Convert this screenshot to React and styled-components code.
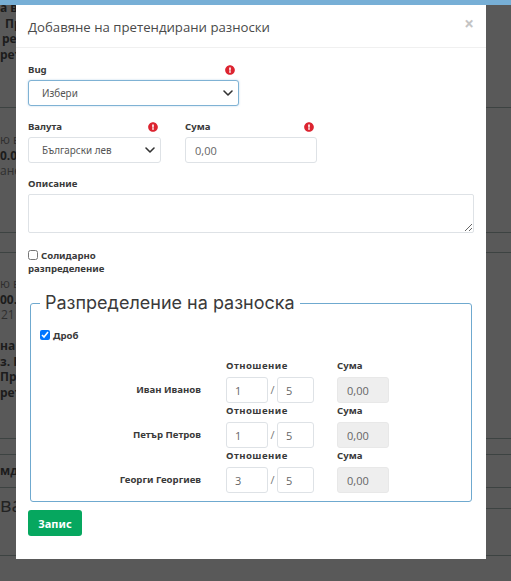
import React from 'react';
import styled, { createGlobalStyle } from 'styled-components';
import { FaExclamationCircle } from 'react-icons/fa';
import { LuChevronDown } from 'react-icons/lu';

const GlobalStyle = createGlobalStyle`
  html, body {
    margin: 0;
    padding: 0;
    height: 100%;
    background: #595959;
    overflow: hidden;
  }
  * { box-sizing: border-box; }
`;

const Page = styled.div`
  position: relative;
  width: 511px;
  height: 581px;
  overflow: hidden;
  font-family: 'Open Sans', 'Noto Sans', sans-serif;
`;

/* page behind the backdrop */
const TopBar = styled.div`
  position: relative;
  z-index: 1;
  height: 5px;
  background: #77afd6;
`;

const Section = styled.div`
  height: ${({ $h }) => $h}px;
  margin-top: ${({ $pull }) => ($pull ? -5 : 0)}px;
  padding-top: ${({ $top }) => $top || 0}px;
  border-bottom: 1px solid #3d4342;
`;

const BackLine = styled.div`
  height: 15.5px;
  line-height: 15.5px;
  font-size: 12px;
  font-weight: ${({ $bold }) => ($bold ? 700 : 400)};
  color: ${({ $bold }) => ($bold ? '#1c1c1c' : '#2f2f2f')};
  padding-left: ${({ $left }) => $left || 0}px;
  white-space: nowrap;
`;

const HeadingRow = styled.div`
  display: flex;
  height: 68px;
  border-bottom: 1px solid #3d4342;
`;

const BackHeading = styled.div`
  flex: none;
  width: 16px;
  margin-top: 5px;
  font-size: 20px;
  line-height: 24px;
  color: #222;
  white-space: nowrap;
`;

const HeadingRule = styled.div`
  flex: 1;
  height: 21px;
  border-bottom: 1px solid #3d4342;
`;

/* modal */
const Modal = styled.div`
  position: absolute;
  left: 16px;
  top: 5px;
  width: 470px;
  height: 554px;
  background: #fff;
`;

const ModalHeader = styled.div`
  display: flex;
  justify-content: space-between;
  height: 43px;
  padding: 12px 12px 0;
  border-bottom: 1px solid #f0f0f0;
`;

const Title = styled.div`
  font-size: 13.2px;
  line-height: 21px;
  color: #4a4a4a;
`;

const Close = styled.span`
  margin-top: -3px;
  font-size: 17px;
  line-height: 20px;
  font-weight: 700;
  color: #c4c4c4;
`;

const ModalBody = styled.div`
  padding: 15px 12px 0;
`;

const FormRow = styled.div`
  display: flex;
  gap: 24px;
  margin-bottom: 14px;
`;

const Field = styled.div`
  width: ${({ $w }) => $w}px;
`;

const LabelRow = styled.div`
  display: flex;
  justify-content: space-between;
  align-items: center;
  height: 14px;
  margin-bottom: 3px;
  padding-right: ${({ $pr }) => $pr || 0}px;
`;

const Label = styled.label`
  font-family: 'Noto Sans', 'Open Sans', sans-serif;
  font-size: 9.6px;
  line-height: 14px;
  font-weight: 700;
  color: #3a3a3a;
`;

const ErrorIcon = styled(FaExclamationCircle)`
  width: 10px;
  height: 10px;
  color: #dc2430;
`;

const SelectWrap = styled.div`
  position: relative;
  height: 26px;
`;

const Select = styled.select`
  appearance: none;
  width: 100%;
  height: 100%;
  padding: 0 24px 0 13px;
  font-family: 'Noto Sans', 'Open Sans', sans-serif;
  font-size: 9.9px;
  color: #555;
  background: #fff;
  border: 1px solid ${({ $focus }) => ($focus ? '#7fb2d4' : '#dee2e6')};
  border-radius: 3px;
  box-shadow: ${({ $focus }) => ($focus ? '0 0 2px rgba(110, 170, 215, 0.5)' : 'none')};
  outline: none;
`;

const Chevron = styled(LuChevronDown).attrs({ strokeWidth: 2.4 })`
  position: absolute;
  right: 3px;
  top: 5px;
  width: 16px;
  height: 16px;
  color: #333;
  pointer-events: none;
`;

const Input = styled.input`
  display: block;
  width: 100%;
  height: 26px;
  padding: 0 ${({ $pad }) => $pad || 9}px;
  font-family: 'Open Sans', sans-serif;
  font-size: 11px;
  color: #666;
  background: ${({ disabled }) => (disabled ? '#eee' : '#fff')};
  border: 1px solid ${({ disabled }) => (disabled ? '#e8e8e8' : '#dee2e6')};
  border-radius: 3px;
  outline: none;
`;

const TextArea = styled.textarea`
  display: block;
  width: 100%;
  height: 39px;
  border: 1px solid #dee2e6;
  border-radius: 2px;
  outline: none;
`;

const CheckLabel = styled.div`
  width: 90px;
  margin-top: 16px;
  font-family: 'Noto Sans', 'Open Sans', sans-serif;
  font-size: 9.6px;
  line-height: 13px;
  font-weight: 700;
  color: #3a3a3a;
`;

const Check = styled.input.attrs({ type: 'checkbox' })`
  width: 10px;
  height: 10px;
  margin: 0 3px 0 0;
  vertical-align: -1px;
`;

const Fieldset = styled.fieldset`
  width: 442px;
  height: 212px;
  margin: 15px 0 0 2px;
  padding: 0 9px;
  border: 1px solid #6fa9cf;
  border-radius: 3px;
`;

const Legend = styled.legend`
  margin-left: 0;
  padding: 0 5px;
  font-family: Inter, 'Noto Sans', sans-serif;
  font-size: 18px;
  line-height: 26px;
  font-weight: 400;
  color: #3a3a3a;
`;

const FractionCheck = styled(CheckLabel)`
  width: auto;
  margin-top: 13px;
  margin-bottom: 16px;
`;

const Grid = styled.div`
  display: grid;
  grid-template-columns: 187px 42px 9px 37px 23px 52px;
  margin-left: -1px;
`;

const GridLabel = styled.div`
  grid-column: ${({ $col }) => $col};
  height: 19px;
  padding-top: 1px;
  font-family: 'Noto Sans', 'Open Sans', sans-serif;
  font-size: 9.6px;
  letter-spacing: ${({ $wide }) => ($wide ? '0.45px' : '0')};
  line-height: 14px;
  font-weight: 700;
  color: #3a3a3a;
  white-space: nowrap;
`;

const PersonName = styled.div`
  grid-column: 1;
  padding-right: 25px;
  font-family: 'Noto Sans', 'Open Sans', sans-serif;
  font-size: 9.6px;
  line-height: 26px;
  font-weight: 700;
  text-align: right;
  color: #3a3a3a;
  white-space: nowrap;
`;

const Slash = styled.span`
  font-size: 11px;
  line-height: 26px;
  text-align: center;
  color: #777;
`;

const SumCell = styled.div`
  grid-column: 6;
`;

const SaveButton = styled.button`
  display: block;
  width: 54px;
  height: 26px;
  margin-top: 8px;
  padding: 0;
  font-family: 'Noto Sans', 'Open Sans', sans-serif;
  font-size: 11px;
  font-weight: 700;
  color: #fff;
  background: #06a75f;
  border: none;
  border-radius: 3px;
`;

const people = [
  { name: 'Иван Иванов', num: '1', den: '5' },
  { name: 'Петър Петров', num: '1', den: '5' },
  { name: 'Георги Георгиев', num: '3', den: '5' },
];

const App = () => {
  return (
    <Page lang="bg">
      <GlobalStyle />
      <TopBar />
      <Section $h={108} $pull>
        <BackLine $bold>а в</BackLine>
        <BackLine $bold $left={5}>Пр</BackLine>
        <BackLine $bold $left={2}>рет</BackLine>
        <BackLine $bold>рет</BackLine>
      </Section>
      <Section $h={125} $top={24}>
        <BackLine>ю в</BackLine>
        <BackLine $bold>0.00</BackLine>
        <BackLine>ане</BackLine>
      </Section>
      <Section $h={20} />
      <Section $h={186} $top={23}>
        <BackLine>ю в</BackLine>
        <BackLine $bold>00.0</BackLine>
        <BackLine $left={1}>21</BackLine>
        <BackLine />
        <BackLine $bold>на н</BackLine>
        <BackLine $bold>з. П</BackLine>
        <BackLine $bold>Пре</BackLine>
        <BackLine $bold>рет</BackLine>
      </Section>
      <Section $h={16} />
      <Section $h={33} $top={8}>
        <BackLine $bold>мд</BackLine>
      </Section>
      <HeadingRow>
        <BackHeading>ва</BackHeading>
        <HeadingRule />
      </HeadingRow>

      <Modal>
        <ModalHeader>
          <Title>Добавяне на претендирани разноски</Title>
          <Close>×</Close>
        </ModalHeader>
        <ModalBody>
          <FormRow>
            <Field $w={211}>
              <LabelRow $pr={4}>
                <Label>Bug</Label>
                <ErrorIcon />
              </LabelRow>
              <SelectWrap>
                <Select $focus>
                  <option>Избери</option>
                </Select>
                <Chevron />
              </SelectWrap>
            </Field>
          </FormRow>
          <FormRow>
            <Field $w={133}>
              <LabelRow $pr={3}>
                <Label>Валута</Label>
                <ErrorIcon />
              </LabelRow>
              <SelectWrap>
                <Select>
                  <option>Български лев</option>
                </Select>
                <Chevron />
              </SelectWrap>
            </Field>
            <Field $w={132}>
              <LabelRow $pr={3}>
                <Label>Сума</Label>
                <ErrorIcon />
              </LabelRow>
              <Input defaultValue="0,00" />
            </Field>
          </FormRow>
          <Field $w={446}>
            <LabelRow>
              <Label>Описание</Label>
            </LabelRow>
            <TextArea />
          </Field>
          <CheckLabel>
            <Check />
            Солидарно разпределение
          </CheckLabel>
          <Fieldset>
            <Legend>Разпределение на разноска</Legend>
            <FractionCheck>
              <Check defaultChecked />
              Дроб
            </FractionCheck>
            <Grid>
              {people.map((p) => (
                <React.Fragment key={p.name}>
                  <GridLabel $col="2 / 5" $wide>Отношение</GridLabel>
                  <GridLabel $col="6">Сума</GridLabel>
                  <PersonName>{p.name}</PersonName>
                  <Input $pad={8} defaultValue={p.num} />
                  <Slash>/</Slash>
                  <Input $pad={8} defaultValue={p.den} />
                  <SumCell>
                    <Input disabled defaultValue="0,00" />
                  </SumCell>
                </React.Fragment>
              ))}
            </Grid>
          </Fieldset>
          <SaveButton>Запис</SaveButton>
        </ModalBody>
      </Modal>
    </Page>
  );
};

export default App;
